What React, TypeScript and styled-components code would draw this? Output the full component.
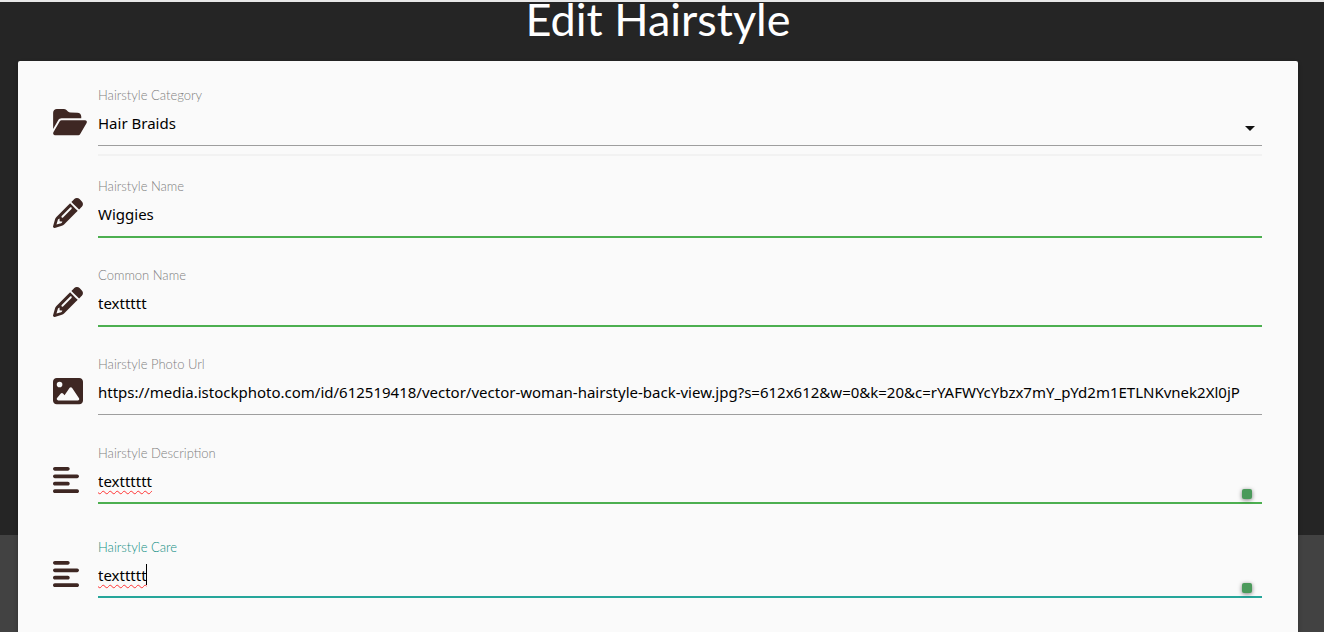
import React from 'react';
import styled, { createGlobalStyle, css } from 'styled-components';
import { FaAlignLeft, FaFolderOpen, FaImage, FaPencil } from 'react-icons/fa6';

const colors = {
  page: '#252525',
  footer: '#424242',
  card: '#fafafa',
  icon: '#3e2723',
  label: '#808080',
  activeLabel: '#128f84',
  plain: '#9e9e9e',
  valid: '#4caf50',
  active: '#26a69a',
};

type Tone = 'plain' | 'valid' | 'active';

const GlobalStyle = createGlobalStyle`
  *, *::before, *::after { box-sizing: border-box; }
  body { margin: 0; background: ${colors.page}; }
`;

const Page = styled.main`
  display: flex;
  flex-direction: column;
  min-height: 100vh;
  border-top: 2px solid #e8e8e8;
  background: linear-gradient(${colors.page} calc(100% - 97px), ${colors.footer} 0);
`;

const Title = styled.h1`
  height: 59px;
  margin: 0;
  padding-right: 8px;
  color: #fff;
  font: 400 45px/34px Lato, sans-serif;
  text-align: center;
`;

const Card = styled.form`
  flex: 1;
  margin: 0 26px 0 18px;
  padding: 25px 36px 0 35px;
  border-radius: 2px 2px 0 0;
  background: ${colors.card};
  box-shadow: 0 2px 4px rgba(0, 0, 0, 0.3);
`;

const Row = styled.div<{ $height: number }>`
  display: grid;
  grid-template-columns: 45px 1fr;
  min-height: ${(p) => p.$height}px;
`;

const IconCell = styled.span<{ $width: number }>`
  padding-top: 21px;
  color: ${colors.icon};
  line-height: 0;

  svg { width: ${(p) => p.$width}px; height: 30px; }
`;

const Field = styled.div`
  position: relative;
  min-width: 0;
`;

const Label = styled.label<{ $tone: Tone }>`
  display: block;
  color: ${(p) => (p.$tone === 'active' ? colors.activeLabel : colors.label)};
  font: 300 13px/18px Lato, sans-serif;
`;

const control = css<{ $tone: Tone }>`
  display: block;
  width: 100%;
  margin: 0;
  padding: 0 0 4px;
  border: 0;
  border-bottom: ${(p) => (p.$tone === 'plain' ? 1 : 2)}px solid ${(p) => colors[p.$tone]};
  border-radius: 0;
  outline: 0;
  background: transparent;
  color: #000;
  font: 400 15px/22px 'Noto Sans', 'Open Sans', sans-serif;
`;

const Input = styled.input<{ $tone: Tone }>`
  ${control}
  height: ${(p) => (p.$tone === 'plain' ? 42 : 43)}px;
`;

const Select = styled.select<{ $tone: Tone }>`
  ${control}
  height: 42px;
  appearance: none;
`;

const TextArea = styled.textarea<{ $tone: Tone }>`
  ${control}
  height: 42px;
  padding-top: 8px;
  overflow: hidden;
  resize: none;
  text-decoration: underline wavy #f33 1px;
  text-decoration-skip-ink: none;
  text-underline-offset: 3px;
`;

const SelectRule = styled.hr`
  height: 2px;
  margin: 8px 0 0;
  border: 0;
  background: #f2f2f2;
`;

const Arrow = styled.svg`
  position: absolute;
  top: 40px;
  right: 7px;
  width: 10px;
  height: 5px;
  pointer-events: none;
`;

const Badge = styled.span`
  position: absolute;
  top: 45px;
  right: 10px;
  width: 10px;
  height: 10px;
  border-radius: 2px;
  background: #4b9a5b;
  box-shadow: 0 1px 4px rgba(0, 0, 0, 0.5);
`;

const Caret = styled.span`
  position: absolute;
  top: 26px;
  left: 48px;
  width: 1px;
  height: 21px;
  background: #000;
`;

const url =
  'https://media.istockphoto.com/id/612519418/vector/vector-woman-hairstyle-back-view.jpg?s=612x612&w=0&k=20&c=rYAFWYcYbzx7mY_pYd2m1ETLNKvnek2Xl0jP';

interface RowProps {
  id: string;
  label: string;
  icon: React.ReactNode;
  iconWidth: number;
  height: number;
  tone: Tone;
  children: React.ReactNode;
}

function FormRow({ id, label, icon, iconWidth, height, tone, children }: RowProps) {
  return (
    <Row $height={height}>
      <IconCell $width={iconWidth} aria-hidden="true">{icon}</IconCell>
      <Field>
        <Label htmlFor={id} $tone={tone}>{label}</Label>
        {children}
      </Field>
    </Row>
  );
}

export default function App() {
  return (
    <>
      <GlobalStyle />
      <Page>
        <Title>Edit Hairstyle</Title>
        <Card>
          <FormRow id="category" label="Hairstyle Category" icon={<FaFolderOpen />} iconWidth={34} height={91} tone="plain">
            <Select id="category" $tone="plain" defaultValue="braids">
              <option value="braids">Hair Braids</option>
            </Select>
            <SelectRule />
            <Arrow viewBox="0 0 10 5" aria-hidden="true"><path d="M0 0h10L5 5z" fill="#111" /></Arrow>
          </FormRow>
          <FormRow id="name" label="Hairstyle Name" icon={<FaPencil />} iconWidth={30} height={89} tone="valid">
            <Input id="name" $tone="valid" defaultValue="Wiggies" />
          </FormRow>
          <FormRow id="common" label="Common Name" icon={<FaPencil />} iconWidth={30} height={89} tone="valid">
            <Input id="common" $tone="valid" defaultValue="texttttt" />
          </FormRow>
          <FormRow id="photo" label="Hairstyle Photo Url" icon={<FaImage />} iconWidth={30} height={89} tone="plain">
            <Input id="photo" $tone="plain" defaultValue={url} />
          </FormRow>
          <FormRow id="description" label="Hairstyle Description" icon={<FaAlignLeft />} iconWidth={26} height={94} tone="valid">
            <TextArea id="description" $tone="valid" spellCheck={false} defaultValue="textttttt" />
            <Badge />
          </FormRow>
          <FormRow id="care" label="Hairstyle Care" icon={<FaAlignLeft />} iconWidth={26} height={94} tone="active">
            <TextArea id="care" $tone="active" spellCheck={false} defaultValue="texttttt" />
            <Caret />
            <Badge />
          </FormRow>
        </Card>
      </Page>
    </>
  );
}
